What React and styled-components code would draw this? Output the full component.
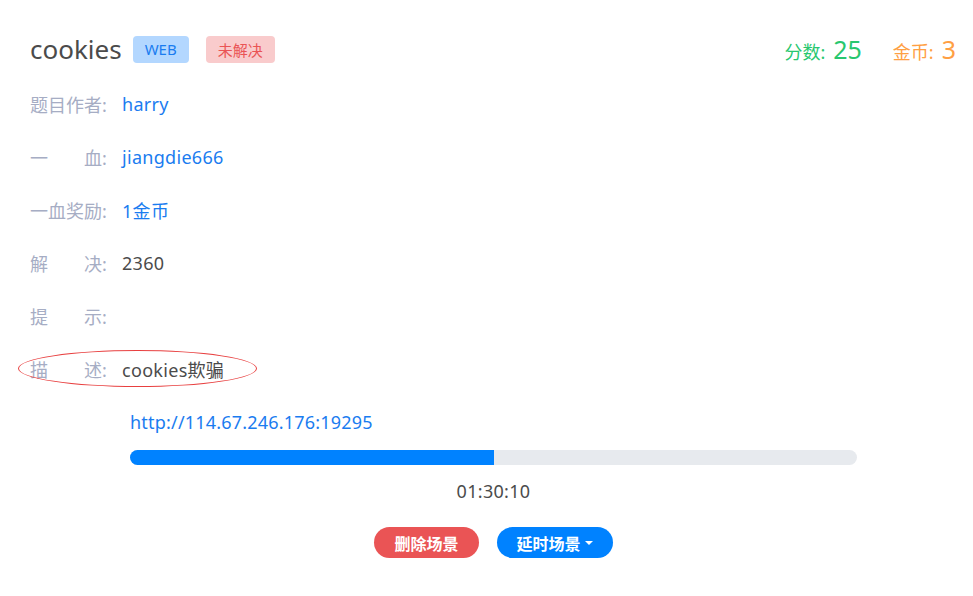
import React from "react";
import styled, { createGlobalStyle } from "styled-components";

const GlobalStyle = createGlobalStyle`
  body {
    margin: 0;
    background: #fff;
    font-family: "Noto Sans", "Noto Sans CJK SC", sans-serif;
    color: #4b4b4b;
  }
`;

const Page = styled.div`
  width: 973px;
  height: 596px;
  box-sizing: border-box;
  padding: 30px 17px 0 30px;
`;

const Header = styled.div`
  display: flex;
  justify-content: space-between;
  align-items: center;
  height: 38px;
`;

const TitleGroup = styled.div`
  display: flex;
  align-items: center;
`;

const Title = styled.h1`
  margin: 0 11px 0 0;
  font-size: 26px;
  font-weight: 400;
  color: #4b4b4b;
`;

const Badge = styled.span`
  display: inline-flex;
  align-items: center;
  justify-content: center;
  height: 27px;
  padding: 0 12px;
  margin-right: 17px;
  border-radius: 4px;
  font-size: 15px;
  background: ${(p) => (p.$danger ? "#f9cbcc" : "#b3d7ff")};
  color: ${(p) => (p.$danger ? "#ea5455" : "#1a7cf0")};
`;

const Stats = styled.div`
  display: flex;
  align-items: baseline;
  gap: 31px;
`;

const Stat = styled.span`
  font-size: 18px;
  color: ${(p) => p.$color};
  b {
    font-weight: 400;
    font-size: 25px;
    margin-left: 8px;
  }
`;

const InfoList = styled.div`
  margin-top: 9px;
`;

const Row = styled.div`
  position: relative;
  display: flex;
  align-items: center;
  height: 53px;
  font-size: 18px;
`;

const Label = styled.span`
  width: 92px;
  flex-shrink: 0;
  color: #a6adc4;
  white-space: pre;
`;

const Value = styled.span`
  letter-spacing: 0.3px;
  color: ${(p) => (p.$link ? "#1a7cf0" : "#4b4b4b")};
`;

const Mark = styled.div`
  position: absolute;
  left: -12px;
  top: 8px;
  width: 239px;
  height: 37px;
  border: 1px solid #e84040;
  border-radius: 50%;
  box-sizing: border-box;
`;

const Scene = styled.div`
  width: 727px;
  margin-left: 100px;
  display: flex;
  flex-direction: column;
`;

const Url = styled.a`
  margin-top: 15px;
  font-size: 18px;
  letter-spacing: 0.2px;
  color: #1a7cf0;
  text-decoration: none;
`;

const Track = styled.div`
  margin-top: 16px;
  height: 15px;
  border-radius: 8px;
  background: #e7eaee;
  overflow: hidden;
`;

const Fill = styled.div`
  height: 100%;
  background: #0082ff;
`;

const Time = styled.div`
  margin-top: 14px;
  text-align: center;
  font-size: 18px;
  letter-spacing: 0.3px;
  color: #4b4b4b;
`;

const Actions = styled.div`
  display: flex;
  justify-content: center;
  gap: 18px;
  margin-top: 24px;
`;

const Button = styled.button`
  display: inline-flex;
  align-items: center;
  gap: 4px;
  height: 31px;
  padding: 0 20px;
  border: none;
  border-radius: 16px;
  font-family: inherit;
  font-size: 16px;
  font-weight: 700;
  color: #fff;
  background: ${(p) => (p.$danger ? "#ea5455" : "#0082ff")};
  cursor: pointer;
`;

const Caret = styled.span`
  width: 0;
  height: 0;
  border-left: 4px solid transparent;
  border-right: 4px solid transparent;
  border-top: 4px solid #fff;
`;

const rows = [
  { label: "题目作者:", value: "harry", link: true },
  { label: "一　　血:", value: "jiangdie666", link: true },
  { label: "一血奖励:", value: "1金币", link: true },
  { label: "解　　决:", value: "2360" },
  { label: "提　　示:", value: "" },
  { label: "描　　述:", value: "cookies欺骗", mark: true },
];

export default function App() {
  const progress = 0.5;
  return (
    <Page>
      <GlobalStyle />
      <Header>
        <TitleGroup>
          <Title>cookies</Title>
          <Badge>WEB</Badge>
          <Badge $danger>未解决</Badge>
        </TitleGroup>
        <Stats>
          <Stat $color="#28c76f">
            分数:<b>25</b>
          </Stat>
          <Stat $color="#ff9f43">
            金币:<b>3</b>
          </Stat>
        </Stats>
      </Header>
      <InfoList>
        {rows.map((r) => (
          <Row key={r.label}>
            {r.mark && <Mark />}
            <Label>{r.label}</Label>
            <Value $link={r.link}>{r.value}</Value>
          </Row>
        ))}
      </InfoList>
      <Scene>
        <Url href="#">http://114.67.246.176:19295</Url>
        <Track>
          <Fill style={{ width: `${progress * 100}%` }} />
        </Track>
        <Time>01:30:10</Time>
        <Actions>
          <Button $danger>删除场景</Button>
          <Button>
            延时场景
            <Caret />
          </Button>
        </Actions>
      </Scene>
    </Page>
  );
}
